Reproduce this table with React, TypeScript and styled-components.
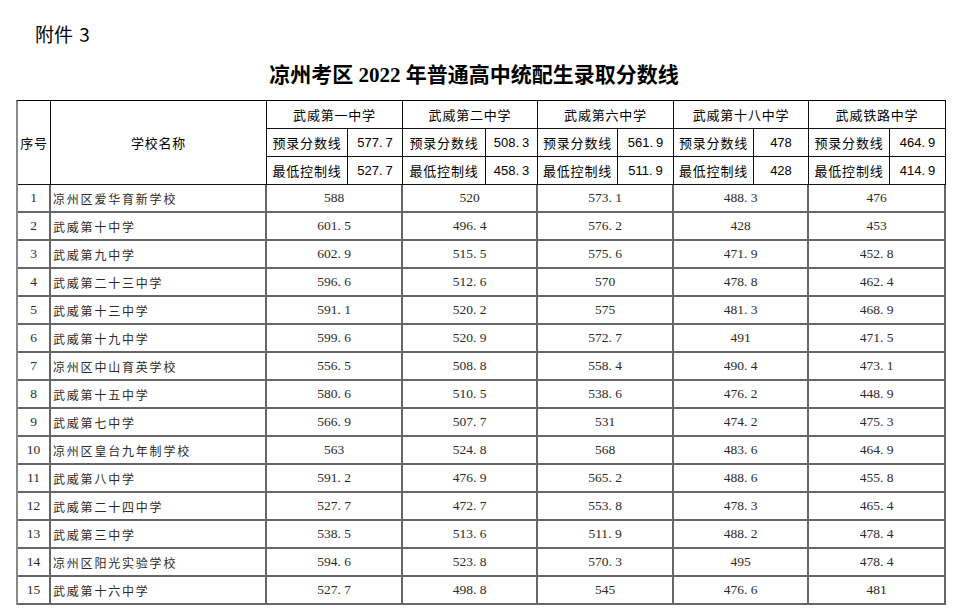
import React from 'react';
import styled, { createGlobalStyle } from 'styled-components';

const Global = createGlobalStyle`
  html, body { margin: 0; padding: 0; background: #fff; }
  body { font-family: "Noto Sans CJK SC", "Noto Sans", sans-serif; color: #000; }
`;

const Page = styled.div`
  width: 966px;
  height: 616px;
  overflow: hidden;
  padding: 22px 0 0 16px;
  box-sizing: border-box;
`;

const Attach = styled.div`
  font-family: "Noto Sans CJK SC", "Noto Sans", sans-serif;
  font-size: 19px;
  line-height: 24px;
  padding-left: 19px;
  color: #000;
  word-spacing: 2px;
`;

const Title = styled.h1`
  margin: 12px 0 10px 0;
  width: 930px;
  padding-right: 14px;
  box-sizing: border-box;
  text-align: center;
  font-family: "Liberation Serif", "Noto Sans CJK SC", serif;
  font-weight: 700;
  font-size: 21px;
  line-height: 30px;
  color: #000;
`;

const Han = styled.span`
  font-family: "Noto Sans CJK SC", sans-serif;
  font-weight: 700;
`;

const Grid = styled.div`
  display: grid;
  grid-template-columns: 33px 216px 81px 55px 83px 52px 80px 56px 80px 55px 81px 56px;
  grid-auto-rows: 28px;
  width: 930px;
  border-top: 1px solid #000;
  border-left: 2px solid #8a8a8a;
  box-sizing: border-box;
`;

const HeadCell = styled.div<{ $span?: number; $rows?: number }>`
  grid-column: span ${(p) => p.$span ?? 1};
  grid-row: span ${(p) => p.$rows ?? 1};
  display: flex;
  align-items: center;
  justify-content: center;
  border-right: 1px solid #111;
  border-bottom: 1px solid #111;
  box-sizing: border-box;
  font-family: "Noto Sans CJK SC", sans-serif;
  font-size: 13px;
  letter-spacing: 0.8px;
  color: #000;
  white-space: nowrap;
`;

const HeadNum = styled(HeadCell)`
  font-family: "Liberation Sans", "Noto Sans", sans-serif;
  font-size: 13px;
  letter-spacing: 0;
`;

const DataCell = styled.div<{ $span?: number; $align?: 'left' | 'center' }>`
  grid-column: span ${(p) => p.$span ?? 1};
  display: flex;
  align-items: center;
  justify-content: ${(p) => (p.$align === 'left' ? 'flex-start' : 'center')};
  padding-left: ${(p) => (p.$align === 'left' ? '2px' : '0')};
  border-right: 2px solid #666;
  border-bottom: 2px solid #666;
  box-sizing: border-box;
  color: #2e2a26;
  white-space: nowrap;
`;

const NumCell = styled(DataCell)`
  font-family: "Liberation Serif", "Times New Roman", serif;
  font-size: 13.5px;
`;

const NameCell = styled(DataCell)`
  font-family: "Noto Sans CJK SC", sans-serif;
  font-size: 12px;
  letter-spacing: 1.8px;
  font-weight: 400;
`;

const Dot = styled.span`
  display: inline-block;
  width: 0.5em;
`;

const Num: React.FC<{ v: string }> = ({ v }) => {
  const parts = v.split('.');
  if (parts.length === 1) return <>{v}</>;
  return (
    <>
      {parts[0]}
      <Dot>.</Dot>
      {parts[1]}
    </>
  );
};

const schools = ['武威第一中学', '武威第二中学', '武威第六中学', '武威第十八中学', '武威铁路中学'];
const pre = ['577.7', '508.3', '561.9', '478', '464.9'];
const low = ['527.7', '458.3', '511.9', '428', '414.9'];

const rows: [string, string[]][] = [
  ['凉州区爱华育新学校', ['588', '520', '573.1', '488.3', '476']],
  ['武威第十中学', ['601.5', '496.4', '576.2', '428', '453']],
  ['武威第九中学', ['602.9', '515.5', '575.6', '471.9', '452.8']],
  ['武威第二十三中学', ['596.6', '512.6', '570', '478.8', '462.4']],
  ['武威第十三中学', ['591.1', '520.2', '575', '481.3', '468.9']],
  ['武威第十九中学', ['599.6', '520.9', '572.7', '491', '471.5']],
  ['凉州区中山育英学校', ['556.5', '508.8', '558.4', '490.4', '473.1']],
  ['武威第十五中学', ['580.6', '510.5', '538.6', '476.2', '448.9']],
  ['武威第七中学', ['566.9', '507.7', '531', '474.2', '475.3']],
  ['凉州区皇台九年制学校', ['563', '524.8', '568', '483.6', '464.9']],
  ['武威第八中学', ['591.2', '476.9', '565.2', '488.6', '455.8']],
  ['武威第二十四中学', ['527.7', '472.7', '553.8', '478.3', '465.4']],
  ['武威第三中学', ['538.5', '513.6', '511.9', '488.2', '478.4']],
  ['凉州区阳光实验学校', ['594.6', '523.8', '570.3', '495', '478.4']],
  ['武威第十六中学', ['527.7', '498.8', '545', '476.6', '481']],
];

export default function App() {
  return (
    <>
      <Global />
      <Page>
        <Attach>附件 3</Attach>
        <Title>
          <Han>凉州考区</Han> 2022 <Han>年普通高中统配生录取分数线</Han>
        </Title>
        <Grid>
          <HeadCell $rows={3}>序号</HeadCell>
          <HeadCell $rows={3}>学校名称</HeadCell>
          {schools.map((s) => (
            <HeadCell key={s} $span={2}>
              {s}
            </HeadCell>
          ))}
          {pre.map((v, i) => (
            <React.Fragment key={'p' + i}>
              <HeadCell>预录分数线</HeadCell>
              <HeadNum>
                <Num v={v} />
              </HeadNum>
            </React.Fragment>
          ))}
          {low.map((v, i) => (
            <React.Fragment key={'l' + i}>
              <HeadCell>最低控制线</HeadCell>
              <HeadNum>
                <Num v={v} />
              </HeadNum>
            </React.Fragment>
          ))}
          {rows.map(([name, vals], i) => (
            <React.Fragment key={name}>
              <NumCell>{i + 1}</NumCell>
              <NameCell $align="left">{name}</NameCell>
              {vals.map((v, j) => (
                <NumCell key={j} $span={2}>
                  <Num v={v} />
                </NumCell>
              ))}
            </React.Fragment>
          ))}
        </Grid>
      </Page>
    </>
  );
}
